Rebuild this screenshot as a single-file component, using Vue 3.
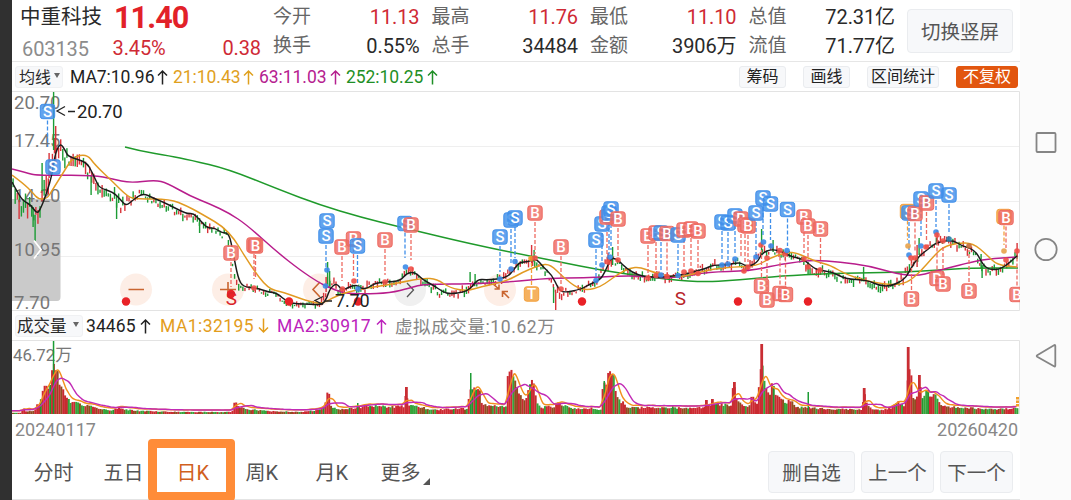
<script setup>
const quotes = [
  [['今开', '11.13', true], ['换手', '0.55%', false]],
  [['最高', '11.76', true], ['总手', '34484', false]],
  [['最低', '11.10', true], ['金额', '3906万', false]],
  [['总值', '72.31亿', false], ['流值', '71.77亿', false]]
]
const averages = [
  { text: 'MA7:10.96', color: '#222', width: 98 },
  { text: '21:10.43', color: '#dfa01e', width: 81 },
  { text: '63:11.03', color: '#b5208f', width: 82 },
  { text: '252:10.25', color: '#1f8f26', width: 92 }
]
const volumes = [
  { text: '34465', color: '#222', width: 65, up: true },
  { text: 'MA1:32195', color: '#e39d1c', width: 109, up: false },
  { text: 'MA2:30917', color: '#bb22bb', width: 110, up: true }
]
const tools = ['筹码', '画线', '区间统计']
const tabs = ['分时', '五日', '日K', '周K', '月K', '更多']
const axis = [['20.70', 109], ['17.45', 147], ['14.20', 202], ['10.95', 256], ['7.70', 309]]

const ma7 = [12,182,20,197,25,202,31,205,37,214,41,208,47,192,52,175,55,155,58,147,61,144,65,150,68,156.5,77,159,87,163,92,172,97,183,100,188,113,192,120,199,126,206,133,200,143,193,153,198,163,202,173,207,187,214,193,213,200,220,207,228,215,228,222,233,229,233,233,252,238,278,243,287,257,288,268,292,277,293,287,302,297,304,310,304,322,305,327,298,330,288,337,283,342,291,355,284,362,289,368,288,375,283,387,282,400,281,407,273,415,272,423,280,433,285,443,292,450,294,465,292,472,287,478,279,487,280,507,278,515,268,520,262,528,262,536,258,543,267,552,275,558,288,563,293,582,289,588,285,600,280,605,272,610,260,613,258,618,260,627,269,638,275,648,277,660,277,677,276,697,271,707,268,713,265,728,265,740,262,747,267,757,263,762,253,772,249,783,252,792,257,803,259,810,265,817,270,833,272,845,279,867,280,880,286,892,286,905,279,910,270,918,257,927,250,937,242,953,240,962,246,970,248,977,253,983,265,990,270,1002,269,1017,256]
const ma21 = [12,175,23,183,33,193,38,199,47,199,53,189,63,173,73,157,87,154,95,165,113,182,128,197,137,199,170,199,187,206,200,213,229,230,250,265,268,289,283,292,307,301,322,304,332,298,347,292,367,288,387,285,403,282,423,278,437,279,450,288,467,291,480,287,507,281,523,272,540,265,550,264,563,277,577,288,588,290,600,287,610,280,620,273,630,268,640,267,652,272,677,278,697,273,713,269,733,267,757,266,770,258,787,252,797,253,817,262,830,265,847,275,870,282,893,285,907,283,920,272,933,257,943,247,957,243,973,243,987,255,997,265,1017,267]
const ma63 = [12,169,27,173,37,175.5,93,175,113,179,130,183,155,180,167,183,190,196,210,204,229,213,247,225,277,252,300,270,318,282,328,287,343,293,363,294,390,293,410,288,420,285,437,284,467,284,510,282,550,278,583,278,620,276,637,276,660,278,683,277,707,272,750,271,777,265,797,262,813,260,840,262,870,266,897,274,917,276,933,272,967,263,987,259,1017,257]
const ma252 = [125,147,140,151,170,156,190,160,228,169,280,190,320,205,360,217,400,227,417,231,450,239,490,248,530,256,560,262,600,270,640,276,697,282.5,740,280,780,276,830,273.5,860,273,905,272,940,270,970,268,1018,268]

const smooth = (a) => {
  let d = `M${a[0]} ${a[1]}`
  for (let i = 2; i < a.length - 2; i += 2) {
    d += `Q${a[i]} ${a[i + 1]} ${(a[i] + a[i + 2]) / 2} ${(a[i + 1] + a[i + 3]) / 2}`
  }
  return d + `L${a[a.length - 2]} ${a[a.length - 1]}`
}
const priceLines = [
  [smooth(ma252), '#1f9a2b'], [smooth(ma63), '#b81d8c'], [smooth(ma21), '#e29a22'], [smooth(ma7), '#1b1b1b']
]
const at = (a, x) => {
  for (let i = 2; i < a.length; i += 2) {
    if (x <= a[i]) return a[i - 1] + (a[i + 1] - a[i - 1]) * (x - a[i - 2]) / (a[i] - a[i - 2])
  }
  return a[a.length - 1]
}
let seed = 71
const rnd = () => (seed = (seed * 16807) % 2147483647) / 2147483647

const RED = '#d8343a'
const GREEN = '#1c9c35'
const candles = []
for (let x = 13; x < 1017; x += 2.07) {
  const calm = x > 240 && x < 320
  const wild = x < 62 ? 2.1 : x < 130 ? 1.5 : calm ? 0.6 : 0.95
  const y = at(ma7, x + 3) + (rnd() - 0.4) * 8 * wild
  const h = (2 + rnd() * 6.5) * wild
  const up = at(ma7, x + 5) < at(ma7, x - 1) ? rnd() < 0.72 : rnd() < 0.35
  candles.push({ x, y: y - h / 2, h, c: up ? RED : GREEN })
}
candles.push(
  ...[[53.5, 92, 58, GREEN], [55.6, 126, 36, RED], [42, 163, 28, GREEN], [49, 153, 25, RED], [35, 215, 26, GREEN], [33, 207, 20, GREEN], [19, 200, 19, RED], [91, 175, 20, GREEN], [116.5, 196, 23, GREEN], [199.5, 218, 15, GREEN], [327.5, 262, 22, GREEN], [326, 277, 15, RED], [329.5, 271, 15, GREEN], [470, 272, 10, GREEN], [475, 274, 10, GREEN], [531.5, 245, 20, RED], [534, 250, 12, GREEN], [553.5, 287, 16, GREEN], [555.6, 292, 18, RED], [612.5, 247, 18, GREEN], [608, 253, 18, RED], [761.5, 229, 25, GREEN], [773, 240, 12, GREEN], [808, 262, 13, GREEN], [863.5, 267, 12, GREEN], [919, 238, 17, GREEN], [917, 245, 22, RED], [937, 230, 14, RED], [981, 254, 15, GREEN], [982, 265, 13, GREEN], [1017, 243, 14, RED]]
    .map(([x, y, h, c]) => ({ x, y, h, c }))
)

// kind, badge x, badge y, far end of the stem
const badges = [
  ['S', 47.5, 111.5, 147], ['S', 53, 167, 0], ['B', 231, 253, 287], ['B', 254, 245, 279], ['B', 255.5, 246, 279],
  ['S', 327, 221, 0], ['S', 326, 236, 268], ['B', 342, 247, 281], ['B', 353.5, 239, 278], ['S', 357.5, 246, 285],
  ['B', 385, 240, 275], ['S', 405, 223.5, 258], ['B', 411, 225, 260], ['S', 500, 237, 272], ['S', 511, 220, 265],
  ['S', 515, 218, 258], ['B', 535, 213, 254], ['T', 531.5, 294, 263], ['B', 561, 247, 284], ['S', 596, 240, 277],
  ['S', 602, 224, 262], ['B', 607, 217, 255], ['S', 609, 213, 254], ['S', 611, 209, 250], ['B', 618, 219, 256],
  ['B', 648, 236, 273], ['B', 656, 233, 271], ['S', 661, 233, 270], ['B', 667, 233.5, 272], ['S', 678, 235, 271],
  ['B', 684, 230, 269], ['B', 691, 229, 267], ['B', 698, 231, 268], ['S', 722, 222, 259], ['S', 728, 223, 260],
  ['S', 735, 216, 253], ['B', 741, 219, 257], ['B', 745, 225, 264], ['B', 748, 226, 262], ['S', 756, 213, 254],
  ['S', 763, 198, 237], ['S', 770.5, 204, 240], ['S', 787.5, 209.5, 246], ['B', 804, 217, 253], ['B', 808, 226, 260],
  ['B', 820.5, 229, 264], ['B', 761.5, 286, 250], ['B', 767, 300, 263], ['B', 780, 293.5, 257], ['B', 785.5, 294.5, 260],
  ['T', 907.5, 211.5, 240], ['S', 909, 213, 250], ['B', 915, 213.5, 252], ['S', 921, 199, 238], ['B', 926.5, 203, 241],
  ['S', 936, 191, 227], ['S', 949, 195, 232], ['B', 911.5, 299, 263], ['B', 937, 278.5, 240], ['B', 943, 284, 246],
  ['B', 969, 291, 250], ['T', 1004, 216.5, 245], ['B', 1006, 217.5, 248], ['B', 1017, 294.5, 256]
].map(([k, x, y, e]) => ({ k, x, y, e, c: k === 'S' ? '#3f8fea' : k === 'B' ? '#ee6a61' : '#f3a03c' }))
const blue = '#3b8be8'
const red = '#ef5048'
const dots = [[254,288,red],[327,270,blue],[325.5,286,blue],[342.5,289,red],[354,281,red],[358,289,blue],[385,282,red],[405.5,267,blue],[411,269,red],[500,279,blue],[511,269,blue],[515,261.5,blue],[531,258.5,'#f19a2d'],[535,258,red],[561,289,red],[596,280.5,blue],[602,265,blue],[608,262,red],[610,257,blue],[618,260,red],[648,278,red],[656,275.5,red],[661,275,blue],[667,276.5,red],[678,275.5,blue],[684,272,red],[691,271,red],[698,273.5,red],[722,265,blue],[728,264,blue],[735,259,blue],[744,271,red],[748,267,red],[756,257,blue],[761,245,red],[763.5,242,blue],[771,246,blue],[767,258,red],[780,250.5,red],[785,254,red],[787,250.5,blue],[804,259,red],[808,267,red],[820,270,red],[908,246,'#e8a24a'],[909,255,blue],[915,258,red],[911,258,red],[921,246,blue],[926,247,red],[936,232,blue],[937,235,red],[943,241,red],[949,239,'#277eaa'],[969,246,'#c46a37'],[1004,251,'#e8a24a'],[1006,260,red],[1017,251,red]]
const events = [126, 289, 358, 582, 738, 808]

const profile = [12,1,20,1,22,6,25,3,34,3,36,11,39,11,42,28,43,25,47,27,51,38,53,44,56,42,58,28,60,24,61,27,64,19,68,17,70,12,77,10,85,9,92,7,100,5,110,3,117,6,120,5,140,3,180,2,231,2,234,12,238,7,245,5,265,3,300,2,318,4,324,8,325,18,328,20,330,8,335,5,345,5,370,8,390,7,403,8,405,26,407,10,420,7,430,4,450,5,460,5,461,9,463,5,467,5,468,22,472,22,474,26,478,26,480,14,485,8,505,8,506,43,510,41,514,30,518,20,525,14,529,30,532,39,534,24,536,12,541,6,547,8,554,6,556,15,559,10,570,6,580,5,590,6,600,4,602,28,605,30,607,37,611,38,613,34,615,20,620,13,626,7,635,6,650,7,670,6,690,6,704,7,712,10,730,9,731,24,734,30,736,15,740,10,749,8,751,18,755,10,757,11,759,47,761,52,763,40,765,23,770,17,771,35,773,24,778,15,785,12,790,14,795,7,810,6,825,5,838,5,861,4,863,22,865,14,868,6,880,4,890,6,897,12,904,8,906,24,908,50,910,38,912,18,917,15,919,36,921,18,925,17,926,30,929,20,935,18,940,9,950,7,970,6,990,5,1005,5,1012,6,1018,5]
const heights = []
const bars = []
for (let x = 12; x < 1018; x += 1.86) {
  const base = at(profile, x)
  const h = Math.max(1.2, base * (0.84 + rnd() * 0.32))
  const r = rnd()
  const hot = at(profile, x) > at(profile, x - 5)
  heights.push([x, h])
  bars.push({ x, h, w: 2, c: hot ? (r < 0.88 ? '#cc2a31' : '#23952f') : (r < 0.3 ? '#35a43a' : r < 0.65 ? '#924c20' : '#c72b30') })
}
bars.push(
  ...[[52.8, 73, GREEN], [357, 11, GREEN], [470, 41, GREEN], [603.5, 33, GREEN], [672, 9, GREEN], [807.5, 22, GREEN], [760.3, 70, '#c92d33'], [906.8, 67, '#c92d33'], [862.8, 26, '#c92d33'], [405, 27, '#c92d33'], [918, 39, '#c92d33'], [733, 32, '#c92d33'], [705, 14, '#c92d33'], [711, 15, '#c92d33']]
    .map(([x, h, c]) => ({ x, h, c, w: c === GREEN ? 1.5 : 2.8 }))
)
const volumeAverage = (n) => smooth(heights.flatMap(([x], i) => {
  const part = heights.slice(Math.max(0, i - n + 1), i + 1)
  return [x, 412 - part.reduce((s, p) => s + p[1], 0) / part.length]
}))
const volumeLines = [[volumeAverage(5), '#f2901f'], [volumeAverage(11), '#c22bb5']]
</script>

<template>
  <div class="screen">
    <div class="edge"></div>
    <main class="panel">
      <header class="header">
        <div class="name"><b class="cn">中重科技</b><span class="code">603135</span></div>
        <div class="price">
          <strong>11.40</strong>
          <div class="change"><span>3.45%</span><span>0.38</span></div>
        </div>
        <div v-for="(q, i) in quotes" :key="i" class="quote">
          <div v-for="row in q" :key="row[0]" class="pair">
            <span class="label">{{ row[0] }}</span><span :class="{ up: row[2] }">{{ row[1] }}</span>
          </div>
        </div>
        <button class="btn switch">切换竖屏</button>
      </header>

      <section class="legend averages">
        <span class="picker">均线<i></i></span>
        <span v-for="a in averages" :key="a.text" class="value" :style="{ width: a.width + 'px', color: a.color }">
          {{ a.text }}<svg width="11" height="18" viewBox="0 0 11 18"><path d="M5.5 16.5V3M1 7.500L5.500 3L10 7.500" /></svg>
        </span>
        <div class="tools">
          <button v-for="t in tools" :key="t">{{ t }}</button>
          <button class="active">不复权</button>
        </div>
      </section>

      <svg class="chart" width="1008" height="220" viewBox="12 91 1008 220">
        <path class="grid" d="M12 146.5H1019M12 201.5H1019M12 256.5H1019" />
        <path class="frame" d="M12 91.5H1019.5V310.5H12" />
        <path class="shade" d="M12 199H57Q60.500 199 60.500 203V297Q60.500 301 57 301H12Z" />
        <text v-for="a in axis" :key="a[0]" x="14" :y="a[1]" class="axis">{{ a[0] }}</text>
        <g class="round">
          <circle cx="136" cy="289.500" r="16" /><circle cx="228" cy="289.500" r="16" />
          <circle cx="319" cy="289.500" r="16" /><circle class="gray" cx="410" cy="290" r="16" /><circle cx="500" cy="290" r="16" />
        </g>
        <path class="glyph" d="M128.500 289.500H144M220 289.500H236M228 282V297M320 282L313 289.500L320 297M493 284L499 289M499 284.500V289H494.500M509 298L502.500 291.500M502.500 297V291.500H508" />
        <path class="chev" d="M407 283L413.500 290L407 297" />
        <rect v-for="(c, i) in candles" :key="i" :x="c.x - 0.6" :y="c.y" width="1.4" :height="c.h" :fill="c.c" />
        <path v-for="l in priceLines" :key="l[1]" :d="l[0]" :stroke="l[1]" class="line" />
        <path class="white" d="M34 240.500L41 249.500L34 258.500" />
        <template v-for="(b, i) in badges" :key="i">
          <line v-if="b.e" :x1="b.x" :x2="b.x" :y1="b.y + (b.e > b.y ? 9 : -9)" :y2="b.e" :stroke="b.c" class="stem" />
        </template>
        <circle v-for="(d, i) in dots" :key="i" :cx="d[0]" :cy="d[1]" r="2.8" :fill="d[2]" opacity=".9" />
        <circle v-for="e in events" :key="e" :cx="e" cy="301.500" r="4.200" fill="#e92227" />
        <circle cx="231" cy="294" r="4.200" fill="#e92227" />
        <text x="231.500" y="305" class="mark">S</text>
        <text x="680.500" y="305" class="mark dark">S</text>
        <g v-for="(b, i) in badges" :key="i" class="badge">
          <rect :x="b.x - 7.2" :y="b.y - 7.2" width="14.400" height="14.400" rx="2.500" :fill="b.c" :stroke="b.c" />
          <text :x="b.x" :y="b.y + 5.3">{{ b.k }}</text>
        </g>
        <path class="pointer" d="M65 106.500L57 111L65 115.500M68 111.500H75M323 296.500L315 300.500L323 304.500M325 301H332" />
        <text x="77" y="117.500" class="note">20.70</text>
        <text x="335" y="306.500" class="note small">7.70</text>
      </svg>

      <section class="legend volume">
        <span class="picker">成交量<i></i></span>
        <span v-for="v in volumes" :key="v.text" class="value" :style="{ width: v.width + 'px', color: v.color }">
          {{ v.text }}<svg width="11" height="18" viewBox="0 0 11 18" :class="{ down: !v.up }"><path d="M5.5 16.5V3M1 7.500L5.500 3L10 7.500" /></svg>
        </span>
        <span class="virtual">虚拟成交量:10.62万</span>
      </section>

      <svg class="chart" width="1008" height="75" viewBox="12 340 1008 75">
        <path class="frame" d="M12 340.500H1019.500V414" />
        <text x="13" y="360.500" class="axis vol">46.72万</text>
        <rect v-for="(b, i) in bars" :key="i" :x="b.x" :y="414 - b.h" :width="b.w" :height="b.h" :fill="b.c" />
        <path v-for="l in volumeLines" :key="l[1]" :d="l[0]" :stroke="l[1]" class="line" />
        <path d="M1017.500 397V407" stroke="#f2a02b" stroke-width="3" stroke-dasharray="2.500 1" />
      </svg>

      <div class="dates"><span>20240117</span><span>20260420</span></div>

      <nav class="tabs">
        <a v-for="t in tabs" :key="t" :class="{ current: t === '日K', more: t === '更多' }">{{ t }}</a>
        <div class="actions">
          <button class="btn wide">删自选</button><button class="btn">上一个</button><button class="btn">下一个</button>
        </div>
      </nav>
    </main>
    <aside class="system">
      <svg width="51" height="500" viewBox="1020 0 51 500">
        <rect x="1036.500" y="133" width="19" height="19" rx="1" />
        <circle cx="1046" cy="249.500" r="10.700" />
        <path d="M1037.200 355.300L1054 345.200Q1055.300 344.600 1055.300 346V365.500Q1055.300 367 1054 366.300L1037.200 356.700Q1036.200 356 1037.200 355.300Z" />
      </svg>
    </aside>
  </div>
</template>

<style>
body { margin: 0; overflow: hidden; }
</style>
<style scoped>
.screen { display: flex; width: 1071px; height: 500px; overflow: hidden; background: #fff; font-family: Roboto, "Noto Sans CJK SC", sans-serif; color: #2a2a2a; }
.screen *, .screen *::after { box-sizing: border-box; }
.edge { width: 12px; background: #303030; }
.panel { width: 1008px; display: flex; flex-direction: column; }
.header { display: flex; height: 62px; padding: 2px 0 0 8px; border-bottom: 1px solid #e6e6e6; font-size: 20px; letter-spacing: -.1px; }
.name { width: 92.500px; display: flex; flex-direction: column; line-height: 30px; }
.cn { font-weight: 400; font-size: 20.5px; letter-spacing: 0; white-space: nowrap; }
.code { color: #8c8c8c; padding: 2px 0 0 2px; }
.price { width: 148.500px; color: #cf2a35; line-height: 30px; }
.price strong { display: block; height: 31px; padding-left: 1.500px; font-size: 30.5px; line-height: 31px; letter-spacing: -.9px; color: #e22129; }
.change { display: flex; justify-content: space-between; }
.quote { width: 146.500px; margin-left: 12px; }
.pair { display: flex; justify-content: space-between; height: 29px; line-height: 30px; }
.label { color: #666; font-size: 19px; letter-spacing: 0; }
.up { color: #cf2a35; }
button { font-family: inherit; padding: 0; color: #222; background: #f7f8fa; border: 1px solid #eaecef; border-radius: 3px; white-space: nowrap; }
.btn { width: 73px; height: 42px; padding-bottom: 2px; font-size: 19.5px; color: #555; border-radius: 4px; }
.switch { width: 106px; height: 44px; margin: 7px 0 0 12px; }
.legend { display: flex; align-items: center; height: 29px; font-size: 17.5px; }
.picker { display: flex; align-items: center; gap: 3px; height: 22px; margin-left: 3px; padding: 0 0 2px 3px; width: 48px; font-size: 16px; background: #f7f8fa; border: 1px solid #f0f1f3; border-radius: 3px; white-space: nowrap; }
.picker i { border: 3px solid transparent; border-top: 5px solid #666; border-bottom: 0; }
.value { display: flex; align-items: center; justify-content: space-between; margin-right: 5px; letter-spacing: -.05px; white-space: nowrap; }
.averages .picker { margin-right: 7px; }
.value svg { fill: none; stroke: currentColor; stroke-width: 1.5; }
.down { transform: rotate(180deg); }
.tools { display: flex; gap: 17px; margin-left: auto; padding-right: 2px; }
.tools button { width: 47px; height: 22px; font-size: 16px; line-height: 20px; }
.tools button:nth-child(3) { width: 72px; }
.tools .active { width: 62px; color: #fff; background: #e2560f; border-color: #e2560f; }
.chart { display: block; flex: none; }
.volume { height: 29px; }
.volume .picker { width: 68px; padding-left: 1px; margin-right: 3px; gap: 6px; font-size: 16.5px; }
.volume .value { margin-right: 8px; letter-spacing: .45px; }
.volume .value:nth-child(2) { margin-right: 9px; letter-spacing: .1px; }
.virtual { color: #858585; letter-spacing: .6px; white-space: nowrap; }
.grid { stroke: #efefef; fill: none; }
.frame { stroke: #e3e3e3; fill: none; }
.shade { fill: #cacaca; }
.axis { font-size: 18.5px; fill: #777; }
.axis.vol { font-size: 16.8px; }
.round circle { fill: #fdeee6; }
.round .gray { fill: #f0f0f0; }
.glyph { stroke: #c96530; stroke-width: 1.6; fill: none; }
.chev { stroke: #555; stroke-width: 1.3; fill: none; }
.white { stroke: #fff; stroke-width: 1.7; fill: none; }
.line { fill: none; stroke-width: 1.45; }
.stem { stroke-width: 1.3; stroke-dasharray: 4 2; }
.badge rect { fill-opacity: .82; stroke-width: 1; }
.badge text { font: 500 15px Roboto, sans-serif; fill: #fff; text-anchor: middle; }
.mark { font-size: 19px; fill: #d9222a; text-anchor: middle; }
.dark { fill: #b8262c; }
.pointer { stroke: #222; stroke-width: 1.3; fill: none; }
.note { font-size: 18.5px; fill: #222; letter-spacing: -.2px; }
.small { font-size: 18px; }
.dates { display: flex; justify-content: space-between; height: 28px; padding: 0 2px 0 3px; font-size: 18px; line-height: 29px; color: #888; letter-spacing: 0; }
.tabs { position: relative; display: flex; align-items: center; height: 57px; padding: 1px 7px 0 21.500px; border-bottom: 1px solid #e4e4e4; font-size: 20px; color: #555; white-space: nowrap; }
.tabs a { width: 70px; }
.tabs a:nth-child(2) { width: 73px; }
.tabs a:nth-child(3) { width: 69px; }
.tabs a:nth-child(5) { width: 65px; }
.tabs .current { color: #d0601f; }
.current::after { content: ''; position: absolute; left: 136px; top: -4px; width: 87px; height: 62px; border: 9px solid #ff8c38; border-radius: 4px; }
.more::after { content: ''; display: inline-block; margin-left: 2px; border-left: 7px solid transparent; border-bottom: 7px solid #555; transform: translateY(5px); }
.actions { display: flex; gap: 6px; margin-left: auto; padding-top: 1px; }
.actions .wide { width: 87px; }
.system { width: 51px; background: #fbfbfb; }
.system svg { display: block; fill: none; stroke: #858585; stroke-width: 1.8; }
</style>
